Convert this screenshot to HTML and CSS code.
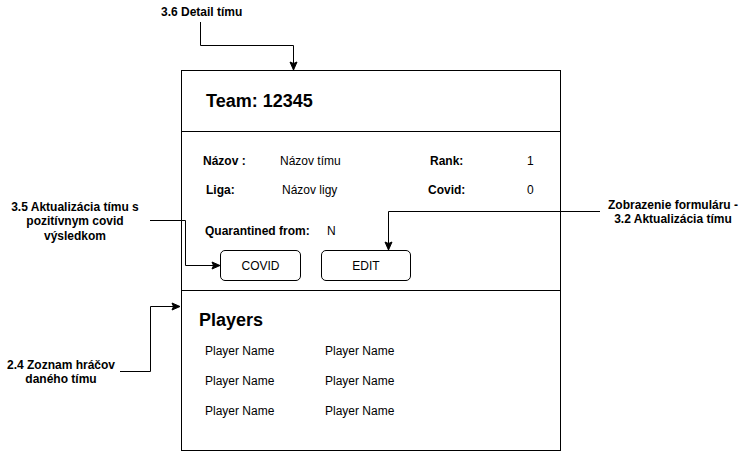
FILE: index.html
```html
<!DOCTYPE html>
<html lang="sk">
<head>
<meta charset="utf-8">
<title>3.6 Detail tímu</title>
<link rel="stylesheet" href="styles.css">
</head>
<body>
<div class="stage">
  <div class="card">
    <div class="card-head">
      <h1 class="team-title">Team: 12345</h1>
    </div>
    <div class="card-info">
      <div class="row row-a">
        <span class="lbl w77">Názov :</span>
        <span class="val w150">Názov tímu</span>
        <span class="lbl w97">Rank:</span>
        <span class="val">1</span>
      </div>
      <div class="row row-b">
        <span class="lbl w76">Liga:</span>
        <span class="val w146">Názov ligy</span>
        <span class="lbl w99">Covid:</span>
        <span class="val">0</span>
      </div>
      <div class="row row-c">
        <span class="lbl w122">Quarantined from:</span>
        <span class="val">N</span>
      </div>
      <div class="actions">
        <button class="btn btn-covid" type="button">COVID</button>
        <button class="btn btn-edit" type="button">EDIT</button>
      </div>
    </div>
    <div class="card-players">
      <h2 class="players-title">Players</h2>
      <div class="players">
        <span>Player Name</span><span>Player Name</span>
        <span>Player Name</span><span>Player Name</span>
        <span>Player Name</span><span>Player Name</span>
      </div>
    </div>
  </div>

  <div class="note note-detail">3.6 Detail tímu</div>
  <div class="note note-covid">3.5 Aktualizácia tímu s<br>pozitívnym covid<br>výsledkom</div>
  <div class="note note-edit">Zobrazenie formuláru -<br>3.2 Aktualizácia tímu</div>
  <div class="note note-players">2.4 Zoznam hráčov<br>daného tímu</div>

  <svg class="wires" width="751" height="451" viewBox="0 0 751 451" aria-hidden="true">
    <path class="wire" d="M200.5 22 V45.5 H293.5 V64"/>
    <polygon class="head" points="293.5,70 290,62 293.5,63.5 297,62"/>
    <path class="wire" d="M150 220.5 H185.5 V265.5 H214"/>
    <polygon class="head" points="220,265.5 212,262 213.5,265.5 212,269"/>
    <path class="wire" d="M600 211.5 H388.5 V244"/>
    <polygon class="head" points="388.5,250 385,242 388.5,243.5 392,242"/>
    <path class="wire" d="M120 371.5 H150.5 V306.5 H174"/>
    <polygon class="head" points="180,306.5 172,303 173.5,306.5 172,310"/>
  </svg>
</div>
</body>
</html>
```
FILE: styles.css
```css
html, body {
  margin: 0;
  padding: 0;
  background: #ffffff;
}

body {
  font-family: "Liberation Sans", Arial, Helvetica, sans-serif;
  color: #000000;
}

.stage {
  position: relative;
  width: 751px;
  height: 451px;
  overflow: hidden;
  box-sizing: border-box;
  padding: 70px 0 0 181px;
}

.card {
  width: 380px;
  box-sizing: border-box;
  border: 1px solid #000000;
}

.card-head {
  height: 61px;
  box-sizing: border-box;
  border-bottom: 1px solid #000000;
  display: flex;
  align-items: center;
  padding-left: 24px;
}

.team-title {
  margin: 0;
  font-size: 18px;
  font-weight: bold;
  line-height: 21px;
}

.card-info {
  height: 159px;
  box-sizing: border-box;
  border-bottom: 1px solid #000000;
  padding-top: 22px;
}

.row {
  display: flex;
  height: 14px;
  font-size: 12px;
  line-height: 14px;
  white-space: nowrap;
}

.row-a { padding-left: 21px; }
.row-b { padding-left: 24px; margin-top: 15px; }
.row-c { padding-left: 23px; margin-top: 27px; }

.lbl { font-weight: bold; }
.val { font-weight: normal; }

.w76 { width: 76px; }
.w77 { width: 77px; }
.w97 { width: 97px; }
.w99 { width: 99px; }
.w122 { width: 122px; }
.w146 { width: 146px; }
.w150 { width: 150px; }

.actions {
  display: flex;
  gap: 20px;
  margin-top: 12px;
  padding-left: 38px;
}

.btn {
  height: 31px;
  box-sizing: border-box;
  border: 1px solid #000000;
  border-radius: 5px;
  background: #ffffff;
  font-family: inherit;
  font-size: 12px;
  color: #000000;
  padding: 0;
  display: flex;
  align-items: center;
  justify-content: center;
}

.btn-covid { width: 81px; }
.btn-edit { width: 90px; }

.card-players {
  height: 159px;
  box-sizing: border-box;
  padding-top: 19px;
}

.players-title {
  margin: 0;
  padding-left: 17px;
  font-size: 18px;
  font-weight: bold;
  line-height: 21px;
}

.players {
  display: grid;
  grid-template-columns: 120px 120px;
  row-gap: 16px;
  margin-top: 13px;
  padding-left: 23px;
  font-size: 12px;
  line-height: 14px;
  white-space: nowrap;
}

.note {
  position: absolute;
  font-size: 12px;
  font-weight: bold;
  line-height: 14.4px;
  text-align: center;
  white-space: nowrap;
}

.note-detail { left: 161px; top: 5px; }
.note-covid { left: 5px; top: 200px; width: 140px; }
.note-edit { left: 603px; top: 198px; width: 140px; }
.note-players { left: 0; top: 358px; width: 122px; }

.wires {
  position: absolute;
  left: 0;
  top: 0;
  pointer-events: none;
}

.wire {
  fill: none;
  stroke: #000000;
  stroke-width: 1;
}

.head {
  fill: #000000;
  stroke: #000000;
  stroke-width: 1;
  stroke-linejoin: miter;
}
```
